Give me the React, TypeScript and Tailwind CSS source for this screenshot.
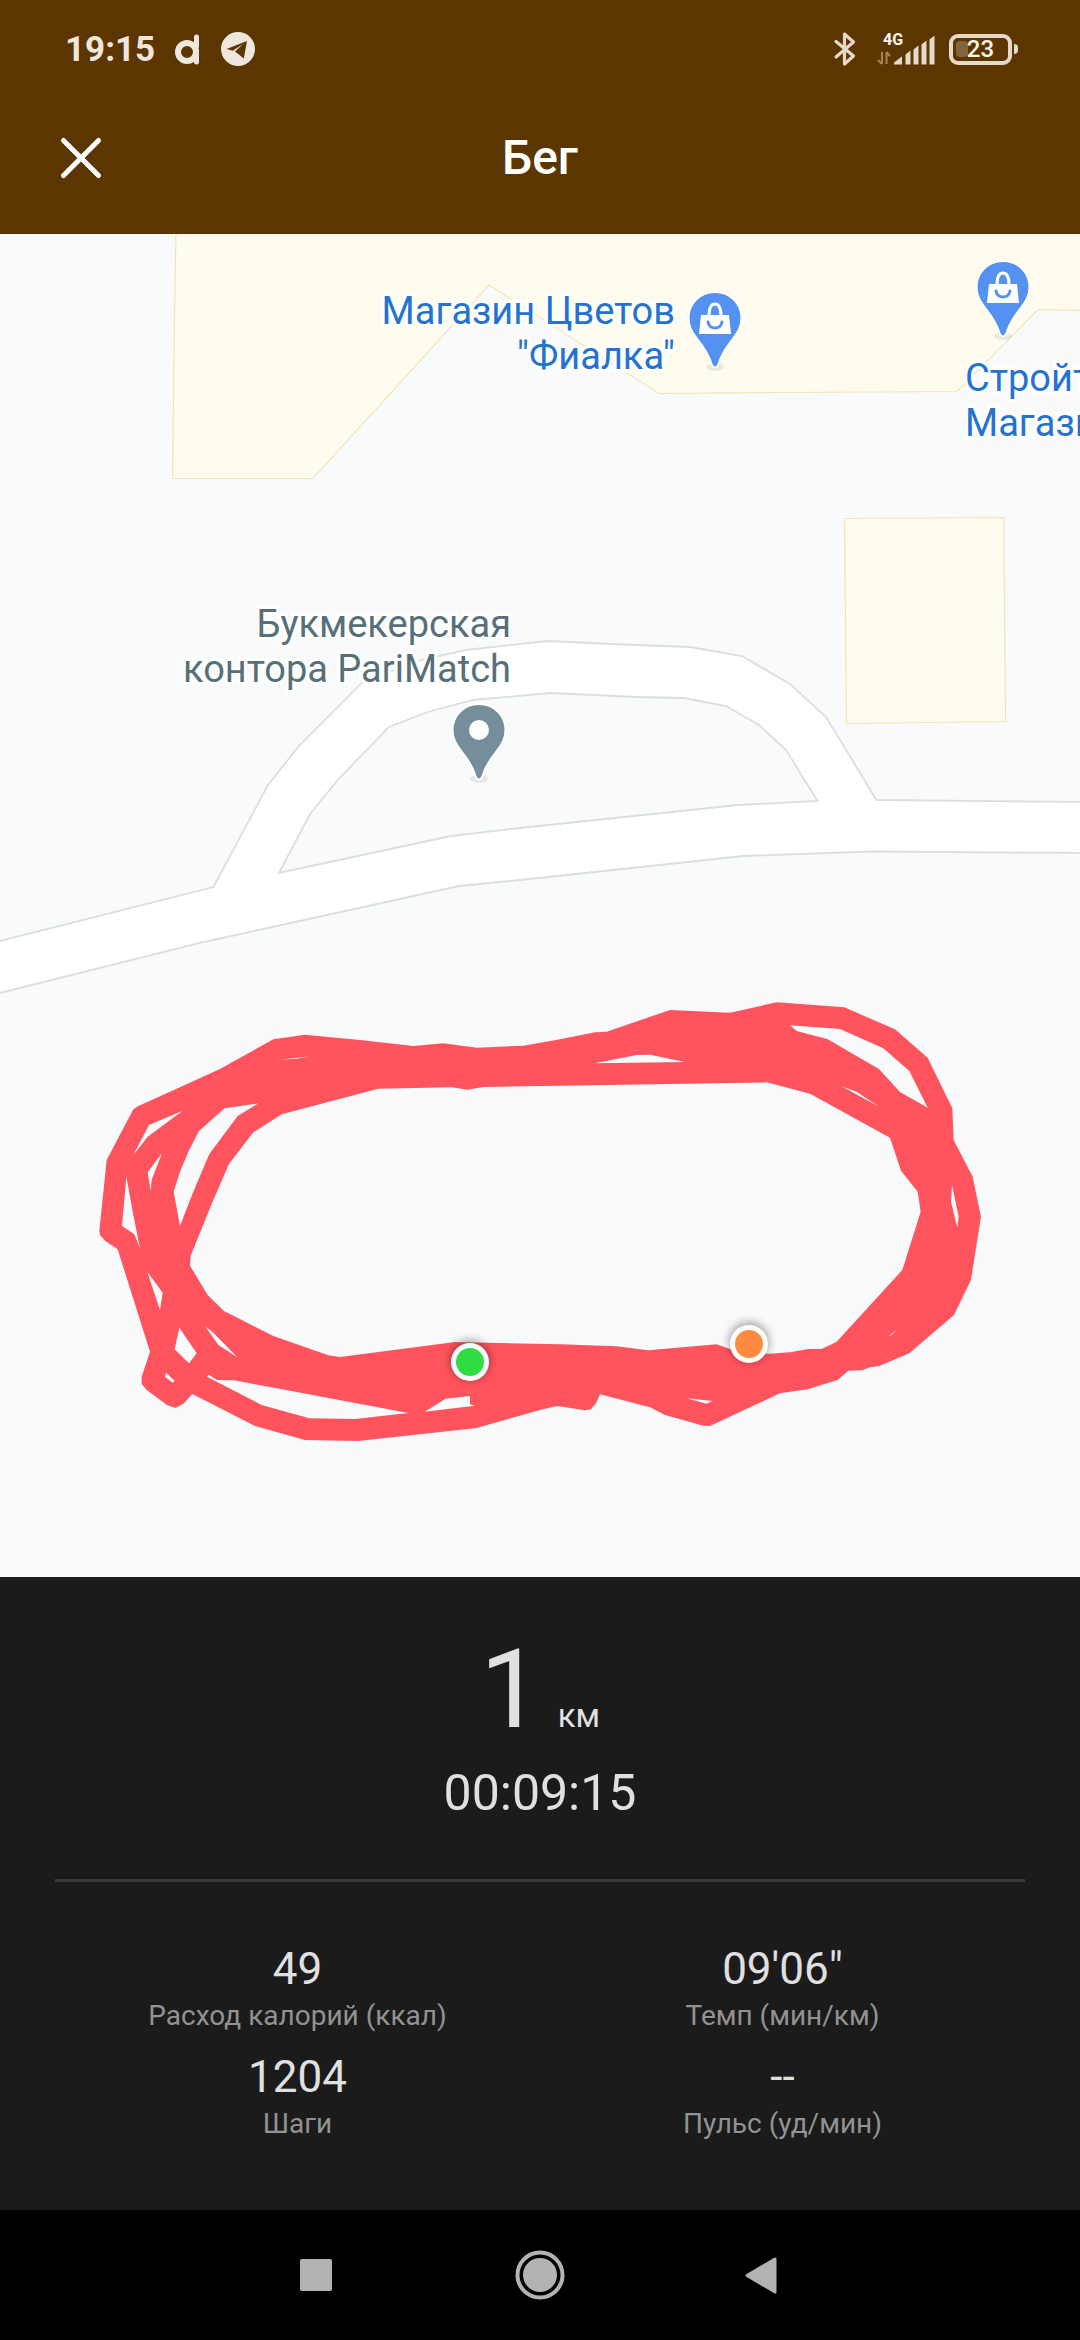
import type { ReactNode } from "react";

const stats = [
  { value: "49", label: "Расход калорий (ккал)" },
  { value: "09'06\"", label: "Темп (мин/км)" },
  { value: "1204", label: "Шаги" },
  { value: "--", label: "Пульс (уд/мин)" },
];

function StatusBar() {
  return (
    <div className="flex h-[98px] items-center justify-between pr-[62px] pl-[65px] text-[#efe7dd]">
      <div className="flex items-center">
        <span className="text-[35px] leading-none font-bold">19:15</span>
        <svg className="ml-[18px] h-9 w-7" viewBox="0 0 28 36" fill="none" stroke="currentColor" strokeLinecap="round">
          <circle cx="14" cy="21" r="9" strokeWidth="6" />
          <path d="M23.500 6v9.500M23.500 20v11" strokeWidth="5" />
        </svg>
        <svg className="ml-5 h-[34px] w-[34px]" viewBox="0 0 34 34">
          <circle cx="17" cy="17" r="17" fill="currentColor" />
          <path d="M5.500 17 26 9l-3.200 17.500-8.800-7 8-7.500-10.200 6.800z" fill="#5c3600" />
        </svg>
      </div>

      <div className="flex items-center">
        <svg
          className="h-9 w-6"
          viewBox="0 0 24 36"
          fill="none"
          stroke="#e6d9c9"
          strokeWidth="3.2"
          strokeLinejoin="round"
          strokeLinecap="round"
        >
          <path d="M3 10.500 20.500 25 11.500 33V3l9 8L3 26" />
        </svg>
        <svg className="ml-5 h-9 w-[60px]" viewBox="0 0 60 36">
          <text x="6" y="14" fontSize="16" fontWeight="700" fill="#fff6ea">
            4G
          </text>
          <g fill="#e6d9c9">
            <path d="M17 33.500v-2l8-6v8z" />
            <path d="M28.500 33.500v-10l5-4v14z" />
            <path d="M36.500 33.500v-15l5-4v19z" />
            <path d="M44.500 33.500v-20l5-4v24z" />
            <path d="M52.500 33.500v-25l5-4v29z" />
          </g>
          <path d="M5 21v12M5 33l-4-4M9.500 33V21M9.500 21l3.500 4" stroke="#a5855c" strokeWidth="2" fill="none" />
        </svg>
        <div className="ml-3 flex items-center">
          <div className="relative flex h-[31px] w-[63px] items-center justify-center rounded-[9px] border-4 border-[#e6d9c9]">
            <span className="absolute left-[3px] h-4 w-3 rounded-sm bg-[#83653d]" />
            <span className="relative text-[24px] leading-none font-medium text-[#fff6ea]">23</span>
          </div>
          <span className="ml-0.5 h-[10px] w-1 rounded-r bg-[#e6d9c9]" />
        </div>
      </div>
    </div>
  );
}

function Header() {
  return (
    <header className="bg-[#5c3600]">
      <StatusBar />
      <div className="grid h-[136px] grid-cols-[1fr_auto_1fr] items-center px-[57px] pb-4">
        <button type="button" aria-label="Закрыть" className="h-12 w-12 text-white">
          <svg viewBox="0 0 48 48" fill="none" stroke="currentColor" strokeWidth="5" strokeLinecap="round">
            <path d="M6.500 6.500l35 35M41.500 6.500l-35 35" />
          </svg>
        </button>
        <h1 className="text-[48px] leading-none font-medium text-white">Бег</h1>
      </div>
    </header>
  );
}

function Pin({ className, color, children }: { className: string; color: string; children: ReactNode }) {
  return (
    <svg className={`absolute h-[84px] w-16 ${className}`} viewBox="0 0 64 84">
      <ellipse cx="32" cy="78" rx="9" ry="4" fill="#000" opacity="0.08" />
      <path
        d="M32 3c-15 0-26.500 11.500-26.500 26 0 9 4 15 9.500 22 6 7.500 10.500 14 13.500 24 1.500 4.500 5.500 4.500 7 0 3-10 7.500-16.500 13.500-24 5.500-7 9.500-13 9.500-22C58.500 14.500 47 3 32 3z"
        fill={color}
        stroke="#fff"
        strokeWidth="2"
      />
      {children}
    </svg>
  );
}

function ShopPin({ className }: { className: string }) {
  return (
    <Pin className={className} color="#5491f0">
      <path d="M18 26h28l2 19H16z" fill="#fff" />
      <path d="M26 27c0-7 2-12 6-12s6 5 6 12" fill="none" stroke="#fff" strokeWidth="3" />
      <path d="M25 33c1 8 13 8 14 0" fill="none" stroke="#5491f0" strokeWidth="3" strokeLinecap="round" />
    </Pin>
  );
}

function MapLabel({ className, children }: { className: string; children: ReactNode }) {
  return (
    <p
      className={`absolute text-[38px] leading-[45px] whitespace-nowrap [-webkit-text-stroke:6px_#fffffe] [paint-order:stroke_fill] ${className}`}
    >
      {children}
    </p>
  );
}

// Union of all the laps; the gaps between laps are cut out with evenodd.
const route = [
  "M58 752 80 540 160 388 175 378 260 340 420 267 580 178 675 164 840 180 1000 198 1090 190 1190 203 1330 197 1440 178 1545 157 1580 155 1770 90 1950 98 2090 67 2293 82 2445 148 2543 233 2617 385 2621 480 2678 590 2703 710 2673 900 2622 1005 2488 1120 2398 1158 2370 1162 2347 1171 2305 1172 2273 1200 2183 1228 2100 1240 1890 1338 1870 1337 1755 1305 1710 1282 1560 1243 1548 1270 1533 1288 1515 1291 1432 1278 1380 1290 1190 1344 835 1383 675 1380 525 1338 337 1242 312 1270 287 1284 262 1276 200 1230 185 1212 185 1190 210 1115 113 808 75 782 60 765Z",
  "M332 827 400 660 447 552 520 457 605 403 895 326 1115 322 1163 329 1210 321 1440 317 2060 307 2190 341 2430 473 2463 572 2513 635 2522 695 2467 870 2270 1085 2225 1107 2185 1107 2130 1117 2070 1121 1990 1121 1910 1093 1705 1111 1610 1099 1440 1093 1125 1086 780 1131 745 1126 580 1068 432 993 383 945 330 857Z",
  "M300 738 338 640 388 522 473 408 535 370 434 385 357 453 325 515 300 575 281 635Z",
  "M160 525 207 435 308 392 203 470Z",
  "M212 632 203 577 246 520 215 600Z",
  "M139 590 126 738 163 763 180 805 160 705Z",
  "M202 876 248 938 240 990Z",
  "M298 1043 284 1108 327 1150 350 1120Z",
  "M258 1178 284 1202 278 1208 255 1190Z",
  "M375 1038 400 1058 472 1132 415 1095Z",
  "M385 1184 412 1200 462 1201 985 1299 825 1317 688 1315 545 1275 381 1190Z",
  "M1034 1295 1097 1256 1170 1248 1170 1273 1185 1277Z",
  "M1545 250 1670 225 1710 224 1815 246Z",
  "M2130 136 2280 147 2410 205 2488 273 2543 383 2460 336 2397 267 2242 177 2150 153Z",
  "M2285 319 2330 335 2397 380Z",
  "M2616 615 2636 710 2632 743 2613 665Z",
  "M2425 1070 2452 1047 2435 1065Z",
  "M1820 1255 1897 1263 1880 1271Z",
  "M600 239 690 229 650 236Z",
].join("");

function RouteMap() {
  return (
    <section aria-label="Карта маршрута" className="relative flex-1 overflow-hidden bg-[#f8fafc]">
      <svg className="block w-full" viewBox="0 234 1080 1343">
        <defs>
          <filter id="dot-shadow" x="-50%" y="-50%" width="200%" height="200%">
            <feGaussianBlur stdDeviation="5" />
          </filter>
        </defs>

        <g fill="#fffbee" stroke="#f3e4b4" strokeWidth="1.2">
          <path d="M176 230 174.500 320 172.500 478.500H313L489 285 659 393.500 780 392.500 957 391.500 1038 309.500 1084 310.500V230z" />
          <path d="M844.500 518.500 1003.700 517.500 1005.500 721.500 846.500 723.500z" />
        </g>

        <g stroke="#dbdedf" strokeWidth="1.800">
          <path
            d="M-4 942 213.500 887 268 785 299 746 362.500 682 421 660 466 650 548 641 634 645 690 647 742 656 790 684 826 717 876.500 800 1084 802V853L873 851.500 743 856 520 880 459 886 204 942-4 994z"
            fill="#fff"
          />
          <path
            d="M279 873 310 814 338.500 779 389 727 427.500 712 473 700 550 693 638 697 684 698 726 706 759 725 786 750 817.500 801 738 805 520 828 451 836z"
            fill="#f8fafc"
          />
        </g>

        <path d={route} transform="translate(80 980) scale(0.33333)" fill="#ff545e" fillRule="evenodd" />

        <circle cx="470" cy="1360" r="20" fill="#000" opacity="0.35" filter="url(#dot-shadow)" />
        <circle cx="470" cy="1362" r="19" fill="#fff" />
        <circle cx="470" cy="1362" r="14" fill="#30dc41" />
        <circle cx="749" cy="1342" r="20" fill="#000" opacity="0.35" filter="url(#dot-shadow)" />
        <circle cx="749" cy="1344" r="19" fill="#fff" />
        <circle cx="749" cy="1344" r="14" fill="#ff8b42" />
      </svg>

      <MapLabel className="top-[55px] right-[405px] text-right text-[#2472d2]">
        Магазин Цветов
        <br />
        "Фиалка"
      </MapLabel>
      <ShopPin className="top-[55px] left-[683px]" />

      <MapLabel className="top-[122px] left-[965px] text-[#2472d2]">
        Стройт
        <br />
        Магази
      </MapLabel>
      <ShopPin className="top-[24px] left-[971px]" />

      <MapLabel className="top-[368px] right-[569px] text-right text-[#566f7a]">
        Букмекерская
        <br />
        контора PariMatch
      </MapLabel>
      <Pin className="top-[467px] left-[447px]" color="#758e9b">
        <circle cx="32" cy="29" r="10" fill="#fff" />
      </Pin>
    </section>
  );
}

function Summary() {
  return (
    <section className="bg-[#1b1b1b] px-[55px] pt-[58px] pb-[52px] text-[#e0e0e0]">
      <p className="flex items-baseline justify-center gap-4 leading-none">
        <span className="text-[110px]">1</span>
        <span className="text-[33px]">км</span>
      </p>
      <p className="mt-[18px] text-center text-[50px] leading-[60px]">00:09:15</p>
      <hr className="mt-14 border-t-[3px] border-[#3b3b3b]" />
      <dl className="mt-[60px] grid grid-cols-2 text-center">
        {stats.map((stat) => (
          <div key={stat.label} className="flex h-[108px] flex-col-reverse justify-end">
            <dt className="text-[28px] leading-[40px] text-[#929292]">{stat.label}</dt>
            <dd className="text-[44px] leading-[54px]">{stat.value}</dd>
          </div>
        ))}
      </dl>
    </section>
  );
}

function NavBar() {
  return (
    <nav className="flex h-[130px] justify-center bg-black text-[#b3b3b3]">
      <button type="button" aria-label="Недавние" className="flex w-56 items-center justify-center">
        <span className="h-8 w-8 rounded-xs bg-current" />
      </button>
      <button type="button" aria-label="Домой" className="flex w-56 items-center justify-center">
        <svg className="h-[50px] w-[50px]" viewBox="0 0 50 50">
          <circle cx="25" cy="25" r="22.500" fill="none" stroke="currentColor" strokeWidth="4" />
          <circle cx="25" cy="25" r="17" fill="currentColor" />
        </svg>
      </button>
      <button type="button" aria-label="Назад" className="flex w-56 items-center justify-center">
        <svg className="h-12 w-12" viewBox="0 0 48 48" fill="currentColor" stroke="currentColor">
          <path d="M7 24.500 35 8v33z" strokeWidth="3" strokeLinejoin="round" />
        </svg>
      </button>
    </nav>
  );
}

export default function App() {
  return (
    <div className="flex min-h-screen flex-col font-[Roboto,sans-serif]">
      <Header />
      <RouteMap />
      <Summary />
      <NavBar />
    </div>
  );
}
